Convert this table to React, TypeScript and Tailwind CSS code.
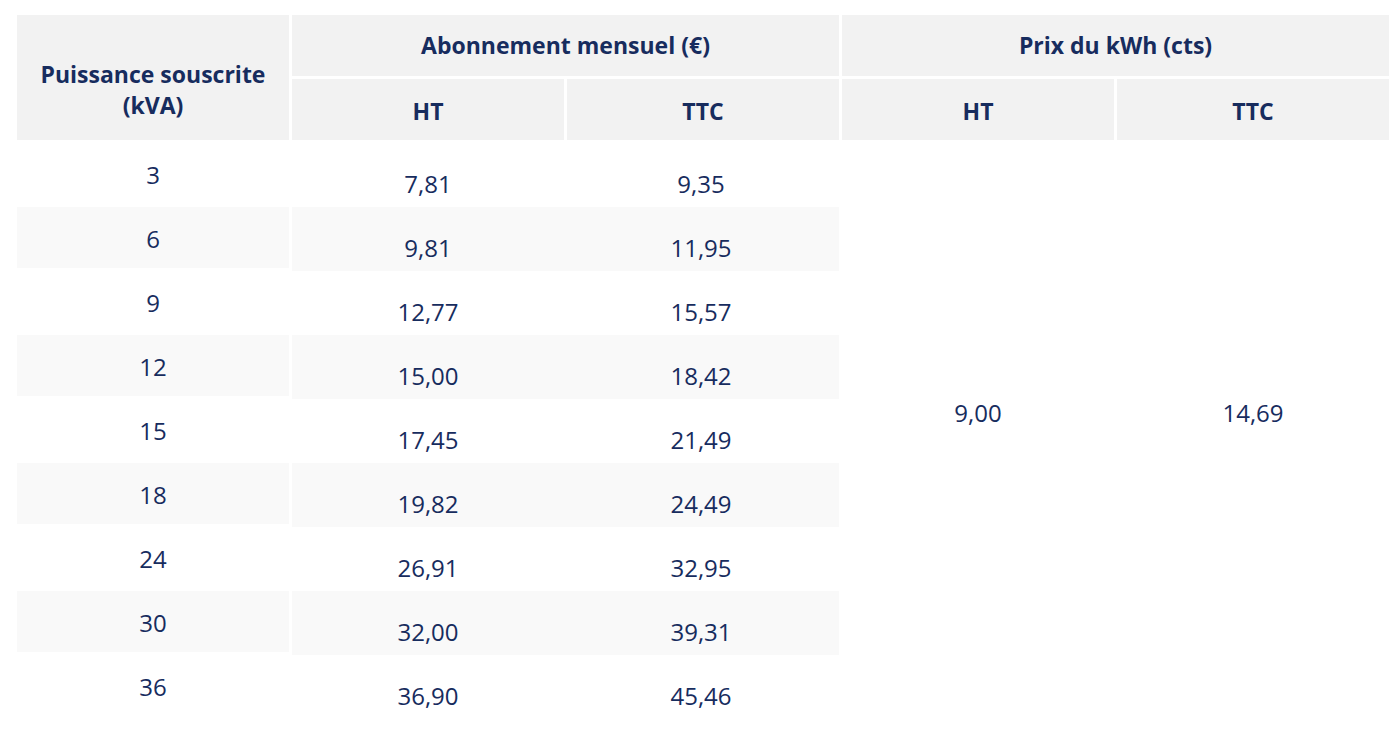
import React from "react";

const rows = [
  { kva: "3", ht: "7,81", ttc: "9,35" },
  { kva: "6", ht: "9,81", ttc: "11,95" },
  { kva: "9", ht: "12,77", ttc: "15,57" },
  { kva: "12", ht: "15,00", ttc: "18,42" },
  { kva: "15", ht: "17,45", ttc: "21,49" },
  { kva: "18", ht: "19,82", ttc: "24,49" },
  { kva: "24", ht: "26,91", ttc: "32,95" },
  { kva: "30", ht: "32,00", ttc: "39,31" },
  { kva: "36", ht: "36,90", ttc: "45,46" },
];

function App() {
  return (
    <div
      className="min-h-screen bg-white pl-[17px] pt-[15px] text-[#172c5e]"
      style={{ fontFamily: "'Open Sans', Lato, sans-serif" }}
    >
      {/* header */}
      <div className="grid grid-cols-[repeat(5,272px)] grid-rows-[61px_61px] gap-[3px] text-[23px] font-bold">
        <div className="row-span-2 flex items-center justify-center bg-[#f2f2f2] pt-[24px] text-center leading-[31px]">
          Puissance souscrite
          <br />
          (kVA)
        </div>
        <div className="col-span-2 flex items-center justify-center bg-[#f2f2f2]">
          Abonnement mensuel (€)
        </div>
        <div className="col-span-2 flex items-center justify-center bg-[#f2f2f2]">
          Prix du kWh (cts)
        </div>
        <div className="flex items-center justify-center bg-[#f2f2f2] pt-[3px]">HT</div>
        <div className="flex items-center justify-center bg-[#f2f2f2] pt-[3px]">TTC</div>
        <div className="flex items-center justify-center bg-[#f2f2f2] pt-[3px]">HT</div>
        <div className="flex items-center justify-center bg-[#f2f2f2] pt-[3px]">TTC</div>
      </div>

      {/* body */}
      <div className="mt-[3px] grid grid-cols-[repeat(5,272px)] grid-rows-[repeat(9,64px)] gap-x-[3px] text-[24px]">
        {rows.map((r, i) => {
          const striped = i % 2 === 1;
          return (
            <React.Fragment key={r.kva}>
              <div
                className={`col-start-1 h-[61px] flex items-center justify-center pt-[3px] ${
                  striped ? "bg-[#f9f9f9]" : ""
                }`}
                style={{ gridRowStart: i + 1 }}
              >
                {r.kva}
              </div>
              <div
                className={`col-start-2 col-span-2 grid grid-cols-[272px_274px] ${
                  striped ? "bg-[#f9f9f9]" : ""
                }`}
                style={{ gridRowStart: i + 1 }}
              >
                <div className="flex items-center justify-center pt-[18px]">{r.ht}</div>
                <div className="flex items-center justify-center pt-[18px]">{r.ttc}</div>
              </div>
            </React.Fragment>
          );
        })}
        <div className="col-start-4 row-start-1 row-span-9 flex items-center justify-center pb-[36px]">
          9,00
        </div>
        <div className="col-start-5 row-start-1 row-span-9 flex items-center justify-center pb-[36px]">
          14,69
        </div>
      </div>
    </div>
  );
}

export default App;
